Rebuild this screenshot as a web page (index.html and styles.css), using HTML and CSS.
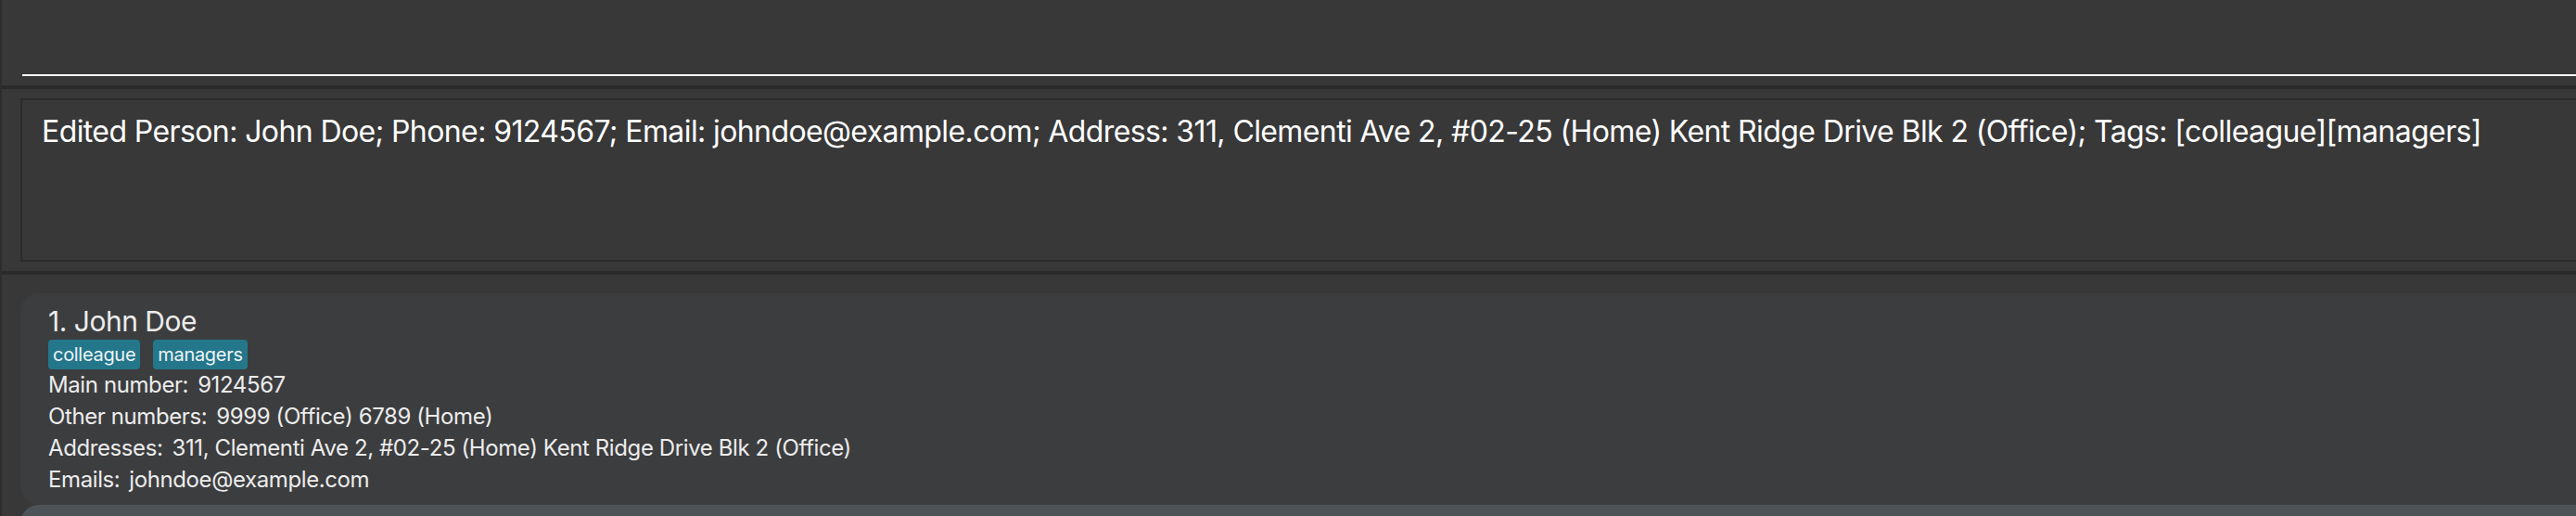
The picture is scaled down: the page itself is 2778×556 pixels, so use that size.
FILE: index.html
```html
<!DOCTYPE html>
<html lang="en">
<head>
<meta charset="utf-8">
<title>Address Book</title>
<link rel="stylesheet" href="styles.css">
</head>
<body>
<div class="app">
  <div class="command-pane">
    <div class="command-input"></div>
  </div>
  <div class="divider"></div>
  <div class="result-pane">
    <div class="result-box">Edited Person: John Doe; Phone: 9124567; Email: johndoe@example.com; Address: 311, Clementi Ave 2, #02-25 (Home) Kent Ridge Drive Blk 2 (Office); Tags: [colleague][managers]</div>
  </div>
  <div class="divider"></div>
  <div class="list-pane">
    <div class="card">
      <div class="card-name">1. John Doe</div>
      <div class="tags">
        <span class="tag">colleague</span>
        <span class="tag">managers</span>
      </div>
      <div class="row"><span>Main number:</span><span>9124567</span></div>
      <div class="row"><span>Other numbers:</span><span>9999 (Office) 6789 (Home)</span></div>
      <div class="row"><span>Addresses:</span><span>311, Clementi Ave 2, #02-25 (Home) Kent Ridge Drive Blk 2 (Office)</span></div>
      <div class="row"><span>Emails:</span><span>johndoe@example.com</span></div>
    </div>
    <div class="card card-alt"></div>
  </div>
</div>
</body>
</html>
```

FILE: styles.css
```css
html, body {
  margin: 0;
  padding: 0;
  background: #383838;
  overflow: hidden;
}

body {
  width: 2778px;
  height: 556px;
  font-family: Inter, "Noto Sans", sans-serif;
}

.app {
  width: calc(100% + 40px);
  height: 556px;
  border-left: 2px solid #2d2d2d;
  display: flex;
  flex-direction: column;
  background: #383838;
  overflow: hidden;
}

.command-pane {
  height: 92px;
  flex: none;
  padding-left: 22px;
  box-sizing: border-box;
}

.command-input {
  height: 80px;
  border-bottom: 2px solid #ffffff;
}

.divider {
  height: 4px;
  flex: none;
  background: #2b2b2b;
  margin-left: -2px;
}

.result-pane {
  flex: none;
  padding: 10px 0 10px 20px;
}

.result-box {
  height: 176px;
  box-sizing: border-box;
  border: 2px solid #2b2b2b;
  padding: 15px 0 0 21px;
  color: #ffffff;
  font-size: 32px;
  line-height: 38px;
  letter-spacing: -0.6px;
  white-space: nowrap;
}

.list-pane {
  padding: 20px 0 0 20px;
  flex: 1;
  min-height: 0;
  display: flex;
  flex-direction: column;
  overflow: hidden;
}

.card {
  flex: none;
  height: 228px;
  box-sizing: border-box;
  background: #3c3d3f;
  border-radius: 20px;
  padding: 12px 0 0 30px;
  color: #ececec;
}

.card-alt {
  background: #4d5356;
  height: 60px;
  padding: 0;
}

.card-name {
  font-size: 30px;
  line-height: 36px;
  letter-spacing: -0.5px;
}

.tags {
  display: flex;
  gap: 14px;
  margin-top: 2px;
}

.tag {
  background: #24778b;
  color: #eef4f6;
  font-size: 20px;
  letter-spacing: -0.3px;
  height: 32px;
  line-height: 32px;
  padding: 0 5px;
  border-radius: 4px;
}

.row {
  display: flex;
  gap: 10px;
  font-size: 24px;
  line-height: 34px;
  letter-spacing: -0.4px;
}
```
